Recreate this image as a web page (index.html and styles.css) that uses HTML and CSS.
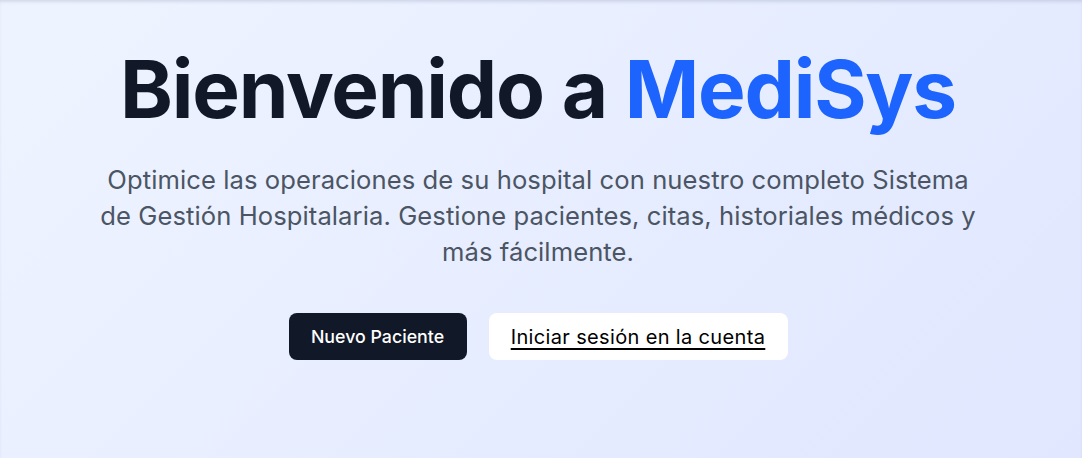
FILE: index.html
```html
<!DOCTYPE html>
<html lang="es">
<head>
<meta charset="utf-8">
<title>MediSys</title>
<link rel="stylesheet" href="styles.css">
</head>
<body>
<section class="hero">
  <h1 class="title">Bienvenido a <span class="brand">MediSys</span></h1>
  <p class="lead">Optimice las operaciones de su hospital con nuestro completo Sistema de Gestión Hospitalaria. Gestione pacientes, citas, historiales médicos y más fácilmente.</p>
  <div class="actions">
    <a class="btn btn-dark" href="#">Nuevo Paciente</a>
    <a class="btn btn-light" href="#">Iniciar sesión en la cuenta</a>
  </div>
</section>
</body>
</html>
```
FILE: styles.css
```css
html, body {
  margin: 0;
  padding: 0;
  height: 100%;
}
body {
  font-family: Inter, "Noto Sans", sans-serif;
  background: linear-gradient(135deg, #eef4ff 0%, #e0e7ff 100%);
  overflow: hidden;
}
.hero {
  position: relative;
  height: 100%;
  display: flex;
  flex-direction: column;
  align-items: center;
  padding: 41px 6px 0 0;
  box-sizing: border-box;
  box-shadow: inset 0 3px 4px -2px rgba(30, 40, 80, 0.18);
}
.title {
  margin: 0;
  font-size: 80px;
  line-height: 1.2;
  font-weight: 700;
  letter-spacing: -1.2px;
  color: #111827;
}
.brand {
  color: #1d63fd;
}
.lead {
  margin: 25px 0 0;
  max-width: 890px;
  text-align: center;
  font-size: 25.6px;
  letter-spacing: 0.08px;
  line-height: 36px;
  color: #4b5563;
  font-weight: 400;
}
.actions {
  display: flex;
  gap: 22px;
  margin-top: 43px;
}
.btn {
  display: flex;
  align-items: center;
  justify-content: center;
  height: 47px;
  border-radius: 8px;
  box-sizing: border-box;
  font-weight: 500;
}
.btn-dark {
  width: 178px;
  background: #111827;
  color: #ffffff;
  font-size: 17.8px;
  text-decoration: none;
}
.btn-light {
  width: 299px;
  background: #ffffff;
  color: #000000;
  font-size: 20px;
  letter-spacing: 0.35px;
  font-weight: 400;
  text-decoration: underline;
  text-decoration-thickness: 1.5px;
  text-underline-offset: 4px;
}
```
